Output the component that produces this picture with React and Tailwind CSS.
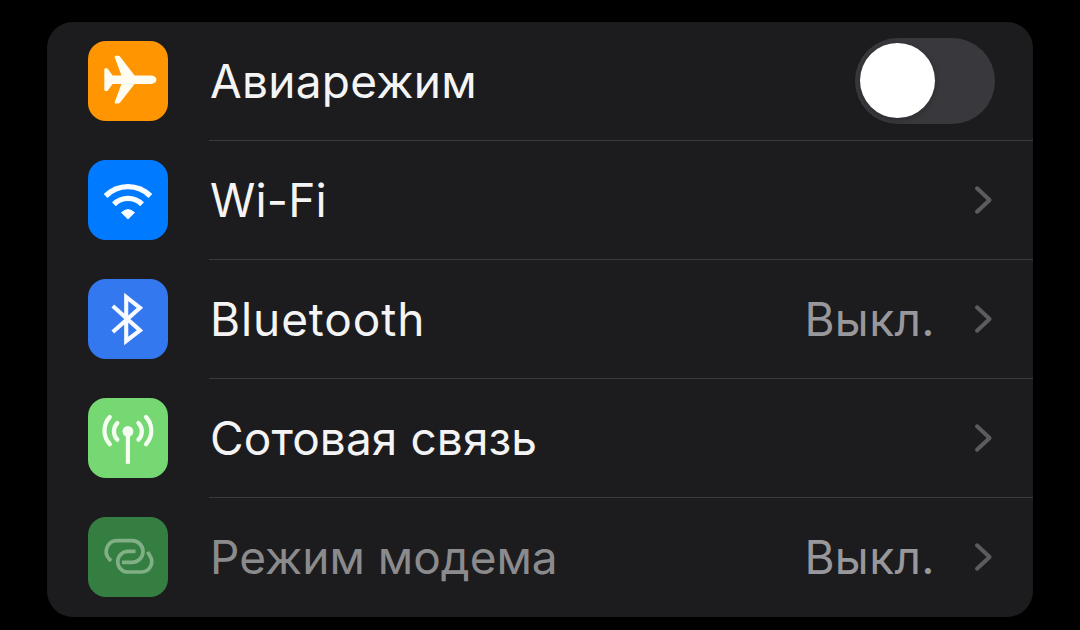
import React, { useState } from 'react';
import clsx from 'clsx';

// --- Icons, all drawn on the 80x80 tile ---
const PlaneIcon = () => (
  <svg className="size-20" viewBox="0 0 80 80" fill="#fffdf2">
    <path d="M16.3 28.2Q16.3 27.2 17.4 27.2H18.6Q19.4 27.2 19.9 27.9L24.6 34.4H33.4L26.8 16.2Q26.2 14.7 27.6 14.7H30.1Q31.4 14.7 32.3 16L46.6 34.4H63.5Q68.4 35.3 68.4 38.7Q68.4 42 63.5 42.9H46.6L32.3 61.3Q31.4 62.6 30.1 62.6H27.6Q26.2 62.6 26.8 61.1L33.4 42.9H24.6L19.9 49.4Q19.4 50.1 18.6 50.1H17.4Q16.3 50.1 16.3 49.1Z" />
  </svg>
);

const WifiIcon = () => (
  <svg className="size-20" viewBox="0 0 80 80" fill="none" stroke="#f7fdff">
    <path d="M17.6 36A31.4 31.4 0 0 1 62.4 36" strokeWidth="5.4" />
    <path d="M26 44.3A19.6 19.6 0 0 1 54 44.3" strokeWidth="5.4" />
    <path d="M33 52.5Q40 45.5 47 52.5L40 59.4Z" fill="#f7fdff" stroke="none" />
  </svg>
);

const BluetoothIcon = () => (
  <svg className="size-20" viewBox="0 0 80 80" fill="none" stroke="#f7fbff" strokeWidth="4.1">
    <path d="M24.8 27L52 51.4L38.2 62V18L52 28.8L24.8 53" />
  </svg>
);

const CellularIcon = () => (
  <svg className="size-20" viewBox="0 0 80 80" fill="none" stroke="#f4fff2" strokeWidth="4.2" strokeLinecap="round">
    <circle cx="39.9" cy="33.4" r="5.4" fill="#f4fff2" stroke="none" />
    <path d="M39.9 34V65.8" strokeWidth="4.2" strokeLinecap="butt" />
    <path d="M29.4 25A12 12 0 0 0 29.4 41.8" />
    <path d="M21.8 19A20 20 0 0 0 21.8 46.2" />
    <path d="M50.4 25A12 12 0 0 1 50.4 41.8" />
    <path d="M58 19A20 20 0 0 1 58 46.2" />
  </svg>
);

const HotspotIcon = () => (
  <svg className="size-20" viewBox="0 0 80 80" fill="none" stroke="#81af86" strokeWidth="3.7">
    <path d="M23 44L21.3 42A10.8 10.8 0 0 1 29.1 23.7H44.2A10.8 10.8 0 0 1 44.2 45.3H34" />
    <path d="M47.5 34.3H39.1A10.4 10.4 0 0 0 39.1 55H53.3A10.4 10.4 0 0 0 61.6 38.3L59.6 34.8" />
  </svg>
);

const Chevron = () => (
  <svg className="w-[22px] h-8 mr-[38px] shrink-0" viewBox="0 0 22 32" fill="none" stroke="#5b5b60" strokeWidth="4" strokeLinecap="round" strokeLinejoin="round">
    <path d="M4 4.3L16.6 16L4 27.7" />
  </svg>
);

const Toggle = () => {
  const [on, setOn] = useState(false);
  return (
    <button
      role="switch"
      aria-checked={on}
      aria-label="Авиарежим"
      onClick={() => setOn(!on)}
      className={clsx('flex items-start w-[140px] h-[86px] p-[5px] mr-[38px] rounded-full', on ? 'bg-[#30d158] justify-end' : 'bg-[#39393d]')}
    >
      <span className="size-[75px] rounded-full bg-white shadow-[0_2px_6px_rgba(0,0,0,0.25)]" />
    </button>
  );
};

const rows = [
  { label: 'Авиарежим', icon: <PlaneIcon />, tile: 'bg-[#ff9500]', toggle: true, spacing: 'tracking-[0.25px]' },
  { label: 'Wi-Fi', icon: <WifiIcon />, tile: 'bg-[#007aff]', spacing: 'tracking-[0.2px]' },
  { label: 'Bluetooth', icon: <BluetoothIcon />, tile: 'bg-[#3478f0]', value: 'Выкл.', spacing: 'tracking-[0.9px]' },
  { label: 'Сотовая связь', icon: <CellularIcon />, tile: 'bg-[#76d872]', spacing: 'tracking-[0.1px]' },
  { label: 'Режим модема', icon: <HotspotIcon />, tile: 'bg-[#357e41]', value: 'Выкл.', disabled: true, spacing: 'tracking-[0px]' },
];

const SettingsRow = ({ row, last }) => (
  <div className="flex h-[119px] pl-[41px]">
    <div className={clsx('size-20 mt-[19px] mr-[41px] rounded-[18px] shrink-0', row.tile)}>{row.icon}</div>
    <div className={clsx('flex flex-1 items-center border-b', last ? 'border-transparent' : 'border-[#3b3b3e]')}>
      <span className={clsx('flex-1 pl-px whitespace-nowrap', row.spacing, row.disabled ? 'text-[#8b8b8d]' : 'text-[#f4f4f5]')}>{row.label}</span>
      {row.value && <span className="mr-[38px] tracking-[0.4px] text-[#98989c]">{row.value}</span>}
      {row.toggle ? <Toggle /> : <Chevron />}
    </div>
  </div>
);

const App = () => (
  <div className="w-[1080px] h-[630px] overflow-hidden bg-black pt-[22px] pl-[47px] font-['Inter',sans-serif] text-[46px] leading-[56px]">
    <div className="w-[986px] rounded-[26px] overflow-hidden bg-[#1c1c1e]">
      {rows.map((row, i) => (
        <SettingsRow key={row.label} row={row} last={i === rows.length - 1} />
      ))}
    </div>
  </div>
);

export default App;
